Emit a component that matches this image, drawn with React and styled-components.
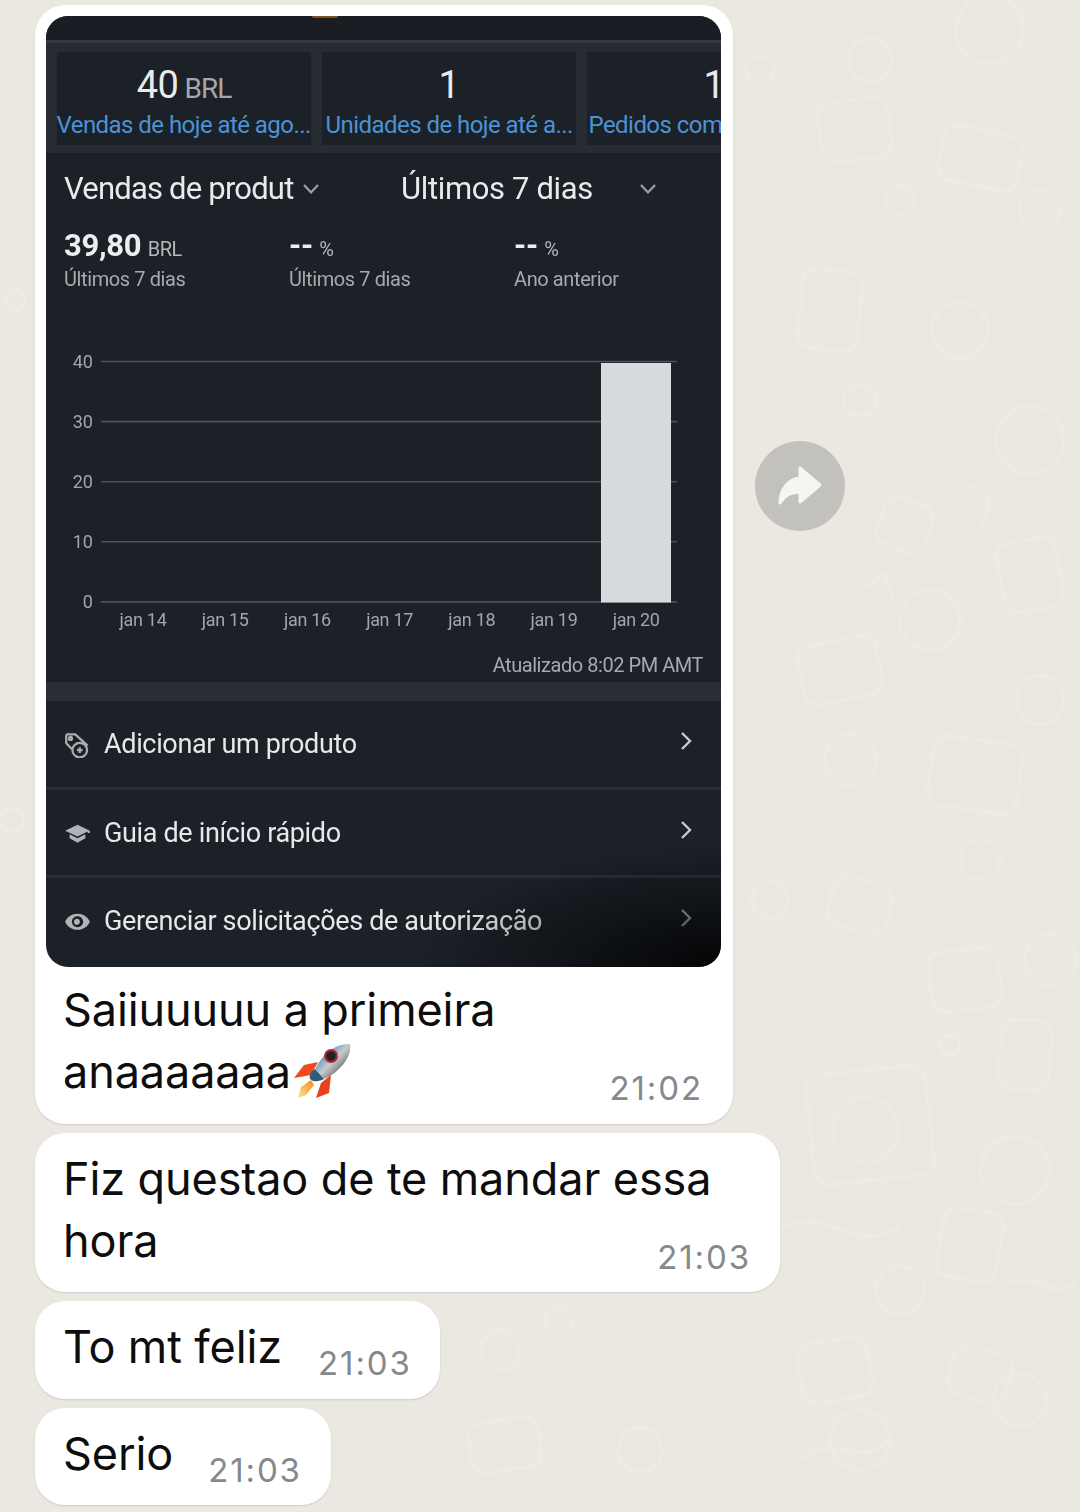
import React from 'react'
import styled, { createGlobalStyle } from 'styled-components'

const GlobalStyle = createGlobalStyle`
  html, body {
    margin: 0;
    padding: 0;
    background: #ebe8e2;
  }
  * { box-sizing: border-box; }
`

const Page = styled.div`
  position: relative;
  width: 1080px;
  height: 1512px;
  overflow: hidden;
  padding: 5px 0 0 35px;
  display: flex;
  flex-direction: column;
  gap: 9px;
  background: #ebe8e2;
  font-family: Inter, "Liberation Sans", sans-serif;
`

const Doodles = styled.svg`
  position: absolute;
  left: 0;
  top: 0;
  fill: none;
  stroke: #efede8;
  stroke-width: 2;
  stroke-linecap: round;
  stroke-linejoin: round;
  filter: blur(0.8px);
`

const Row = styled.div`
  position: relative;
  display: flex;
  align-items: flex-start;
  gap: 22px;
`

const Bubble = styled.div`
  position: relative;
  background: #fff;
  border-radius: 30px;
  box-shadow: 0 1px 2px rgba(0, 0, 0, 0.12);
  padding: ${p => p.$media ? '11px 12px 0 11px' : '15px 29px 0 29px'};
  width: ${p => p.$width}px;
  height: ${p => p.$height}px;
`

const ForwardButton = styled.div`
  margin-top: 436px;
  width: 90px;
  height: 90px;
  border-radius: 50%;
  background: #c3c1bc;
  display: flex;
  align-items: center;
  justify-content: center;
`

const Shot = styled.div`
  position: relative;
  height: 951px;
  border-radius: 22px;
  overflow: hidden;
  background: #1c2128;
  font-family: Roboto, sans-serif;
  color: #e6e8e9;
  display: flex;
  flex-direction: column;

  &::after {
    content: '';
    position: absolute;
    right: 0;
    bottom: 0;
    width: 300px;
    height: 120px;
    background: radial-gradient(ellipse at 100% 100%, rgba(0, 0, 0, 0.85), rgba(0, 0, 0, 0) 70%);
  }
`

const Blurred = styled.div`
  display: flex;
  flex-direction: column;
  flex: 1;
  filter: blur(0.6px);
`

const TopBar = styled.div`
  height: 24px;
  flex: none;
  background: #1a1e24;
  display: flex;
  justify-content: center;

  &::before {
    content: '';
    width: 26px;
    height: 2px;
    margin-left: -118px;
    background: #7a5518;
    border-radius: 0 0 8px 8px;
  }
`

const KpiStrip = styled.div`
  height: 113px;
  flex: none;
  background: #272c32;
  border-top: 3px solid #353a40;
  padding: 9px 0 8px 11px;
  display: flex;
  gap: 11px;
  overflow: hidden;
`

const KpiCard = styled.div`
  flex: none;
  width: 254px;
  background: #1c2027;
  display: flex;
  flex-direction: column;
  align-items: center;
`

const KpiValue = styled.div`
  font-size: 38px;
  line-height: 44px;
  height: 44px;
  margin-top: 11px;
  color: #e8eaeb;
  letter-spacing: -0.5px;

  span {
    font-size: 28px;
    line-height: 1;
    color: #a4a8ab;
    letter-spacing: -1px;
  }
`

const KpiLabel = styled.div`
  font-size: 24px;
  line-height: 30px;
  margin-top: 3px;
  margin-left: -1px;
  letter-spacing: -0.55px;
  color: #4a93d6;
  white-space: nowrap;
  width: 100%;
  padding-left: ${p => p.$inset}px;
`

const Selectors = styled.div`
  height: 66px;
  flex: none;
  padding: 5px 0 0 18px;
  display: flex;
  align-items: center;
  font-size: 31px;
  letter-spacing: -0.35px;
  color: #e8eaeb;
`

const Selector = styled.div`
  width: ${p => p.$width}px;
  margin-left: ${p => p.$left || 0}px;
  letter-spacing: ${p => p.$tight ? '-0.8px' : 'inherit'};
  overflow: hidden;
  white-space: nowrap;
  flex: none;
`

const Caret = styled.svg`
  flex: none;
  margin-left: ${p => p.$gap}px;
  stroke: #9ea2a6;
  fill: none;
  stroke-width: 2.2;
`

const Stats = styled.div`
  flex: none;
  height: 92px;
  padding: 10px 0 0 18px;
  display: grid;
  grid-template-columns: 225px 225px 1fr;
  align-content: start;
`

const StatValue = styled.div`
  font-size: 31px;
  line-height: 34px;
  height: 34px;
  font-weight: 700;
  letter-spacing: -0.3px;
  color: #eceeef;
  white-space: nowrap;

  span {
    font-size: 20px;
    line-height: 1;
    font-weight: 400;
    margin-left: -1px;
    color: #b4b8ba;
    letter-spacing: -0.5px;
  }
`

const StatLabel = styled.div`
  font-size: 20px;
  line-height: 25px;
  margin-top: 4px;
  letter-spacing: -0.4px;
  color: #a6aaad;
`

const ChartSvg = styled.svg`
  flex: none;
  display: block;

  text {
    font-family: Roboto, sans-serif;
    font-size: 18px;
    fill: #a2a6a9;
    letter-spacing: -0.3px;
  }
`

const Updated = styled.div`
  flex: none;
  height: 33px;
  padding: 3px 18px 0 0;
  text-align: right;
  font-size: 20px;
  line-height: 27px;
  letter-spacing: -0.45px;
  color: #a6aaad;
`

const SectionGap = styled.div`
  flex: none;
  height: 19px;
  background: #292e35;
`

const MenuRow = styled.div`
  flex: none;
  height: ${p => p.$height}px;
  padding: 0 28px ${p => p.$last ? '3px' : '0'} 18px;
  display: flex;
  align-items: center;
  border-bottom: ${p => p.$last ? 'none' : '3px solid #2b3037'};
`

const MenuIcon = styled.svg`
  flex: none;
  width: 27px;
  height: 27px;
  margin-right: 13px;
`

const MenuText = styled.div`
  flex: 1;
  font-size: 27px;
  letter-spacing: -0.35px;
  color: #e6e8e9;
  white-space: nowrap;
`

const Chevron = styled.svg`
  flex: none;
  margin-top: -6px;
  fill: none;
  stroke: #c9cccd;
  stroke-width: 2.4;
`

const CaptionBlock = styled.div`
  padding: 12px 18px 0 18px;
  margin-left: -1px;
`

const Message = styled.div`
  font-size: 45px;
  line-height: 62px;
  letter-spacing: -0.1px;
  color: #0d0d0d;
  white-space: nowrap;
`

const CaptionLine = styled.div`
  display: flex;
  align-items: flex-end;
  justify-content: space-between;
`

const MessageText = styled.span`
  display: inline-flex;
  align-items: flex-end;
`

const Time = styled.div`
  font-size: 33px;
  line-height: 40px;
  letter-spacing: 1.9px;
  color: #86898b;
  margin-bottom: -5px;
  margin-left: ${p => p.$left || 0}px;
`

const SingleLine = styled.div`
  display: flex;
  align-items: flex-end;
  margin-left: -1px;
`

const BubbleText = styled.div`
  margin-left: -1px;
`

const RocketSvg = styled.svg`
  margin-left: 3px;
  margin-bottom: 4px;
`

const Rocket = () => (
  <RocketSvg width="58" height="56" viewBox="0 0 58 56">
    <defs>
      <linearGradient id="rocketBody" x1="0" y1="0" x2="1" y2="1">
        <stop offset="0.22" stopColor="#4a8ec8" />
        <stop offset="0.5" stopColor="#c9cccc" />
        <stop offset="0.72" stopColor="#7d8082" />
        <stop offset="1" stopColor="#45494b" />
      </linearGradient>
      <linearGradient id="rocketFire" x1="0" y1="1" x2="1" y2="0">
        <stop offset="0" stopColor="#ffe590" />
        <stop offset="1" stopColor="#f08a1c" />
      </linearGradient>
    </defs>
    <path d="M0 35 L10 22 L24 19 L17 32 Z" fill="#ee4a1e" />
    <path d="M22 55 L27 40 L37 32 L35 50 Z" fill="#e8421c" />
    <path d="M4 55 L7 44 L17 37 L20 42 L12 52 Z" fill="url(#rocketFire)" />
    <path d="M56 1 C44 0 30 8 21 26 L30 36 C48 28 58 12 56 1 Z" fill="url(#rocketBody)" />
    <path d="M21 26 C16 29 15 34 16 36 L19 38 C23 39 28 37 30 36 Z" fill="#2f5f78" />
    <circle cx="37" cy="13" r="7" fill="#b3263a" />
    <circle cx="37" cy="13" r="4.8" fill="#222" />
  </RocketSvg>
)

// faint wallpaper marks, all in one place so they are easy to tweak
const doodleCircles = [
  [990, 30, 34], [870, 60, 22], [1040, 210, 20], [900, 200, 14], [960, 330, 28], [860, 400, 16],
  [1030, 440, 34], [930, 620, 30], [1040, 700, 24], [850, 760, 26], [980, 860, 20], [1050, 960, 26],
  [865, 1130, 33], [950, 1045, 10], [1015, 1170, 34], [900, 1290, 24], [1020, 1400, 26], [640, 1450, 22],
  [500, 1350, 20], [860, 1440, 30], [15, 300, 10], [12, 820, 12], [760, 70, 14], [770, 900, 18], [560, 1320, 14],
]
const doodleRects = [
  [820, 100, 70, 60, -8], [940, 130, 80, 56, 12], [800, 270, 60, 80, 6], [1000, 540, 60, 70, -10],
  [880, 500, 50, 50, 20], [800, 640, 80, 60, -12], [930, 740, 90, 70, 8], [830, 880, 60, 50, 14],
  [930, 950, 70, 60, -6], [810, 1070, 120, 110, -6], [1000, 1020, 50, 70, 4], [940, 1210, 60, 70, 10],
  [800, 1340, 70, 60, -10], [950, 1350, 60, 50, 14], [470, 1420, 70, 50, -8],
]

const Wallpaper = () => (
  <Doodles width="1080" height="1512" viewBox="0 0 1080 1512">
    {doodleCircles.map(([x, y, r]) => (
      <circle key={`${x}-${y}`} cx={x} cy={y} r={r} />
    ))}
    {doodleRects.map(([x, y, w, h, a]) => (
      <rect key={`${x}-${y}`} x={x} y={y} width={w} height={h} rx="14" transform={`rotate(${a} ${x + w / 2} ${y + h / 2})`} />
    ))}
    <path d="M780 1230 C820 1200 860 1260 900 1225 M1000 1290 C1030 1260 1060 1310 1075 1280 M860 590 l24 -16 l10 24 M960 480 l30 18 l-8 28 M800 1460 c30 -30 60 10 90 -20" />
  </Doodles>
)

const days = ['jan 14', 'jan 15', 'jan 16', 'jan 17', 'jan 18', 'jan 19', 'jan 20']
const ticks = [40, 30, 20, 10, 0]

const SalesChart = () => (
  <ChartSvg width="675" height="338" viewBox="0 0 675 338">
    {ticks.map((t, i) => (
      <g key={t}>
        <line x1="55" x2="631" y1={50.5 + i * 60.1} y2={50.5 + i * 60.1} stroke="#4d5257" strokeWidth="1.6" />
        <text x="46.5" y={56.5 + i * 60.1} textAnchor="end">{t}</text>
      </g>
    ))}
    <rect x="555" y="52" width="70" height="239.5" fill="#d8dbdd" />
    {days.map((d, i) => (
      <text key={d} x={97 + i * 82.2} y="315" textAnchor="middle">{d}</text>
    ))}
  </ChartSvg>
)

const kpis = [
  { value: '40', unit: 'BRL', label: 'Vendas de hoje até ago...', inset: 0 },
  { value: '1', label: 'Unidades de hoje até a...', inset: 4 },
  { value: '1', label: 'Pedidos com', inset: 2 },
]

const menu = [
  {
    label: 'Adicionar um produto',
    height: 89,
    icon: (
      <g fill="none" stroke="#a9adaf" strokeWidth="2">
        <path d="M2 3 h8 l11 10 M2 3 v8 l5 5" />
        <circle cx="5.8" cy="6.6" r="1.3" />
        <circle cx="14" cy="17" r="6.5" />
        <path d="M14 14.5 v5 M11.5 17 h5" />
      </g>
    ),
  },
  {
    label: 'Guia de início rápido',
    height: 88,
    icon: <path fill="#b0b4b6" d="M5 13.5 v3.7 L12 21 l7-3.8 v-3.7 L12 17 z M12 5 L1 10.5 12 15.5 21 11 v1.5 h2 V10.5 z" />,
  },
  {
    label: 'Gerenciar solicitações de autorização',
    height: 89,
    last: true,
    icon: <path fill="#b0b4b6" fillRule="evenodd" d="M12 5C7 5 2.7 8 1 12.2c1.7 4.2 6 7.2 11 7.2s9.3-3 11-7.2C21.3 8 17 5 12 5zm0 12c-2.8 0-5-2.2-5-4.8s2.2-4.8 5-4.8 5 2.2 5 4.8-2.2 4.8-5 4.8zm0-7.4a2.7 2.7 0 1 0 0 5.3 2.7 2.7 0 0 0 0-5.3z" />,
  },
]

function Caption() {
  return (
    <CaptionBlock>
      <Message>Saiiuuuuu a primeira</Message>
      <CaptionLine>
        <Message>
          <MessageText>anaaaaaaa<Rocket /></MessageText>
        </Message>
        <Time>21:02</Time>
      </CaptionLine>
    </CaptionBlock>
  )
}

export default function App() {
  return (
    <Page>
      <GlobalStyle />
      <Wallpaper />

      <Row>
        <Bubble $media $width={698} $height={1119}>
          <Shot>
            <Blurred>
              <TopBar />
              <KpiStrip>
                {kpis.map(k => (
                  <KpiCard key={k.label}>
                    <KpiValue>
                      {k.value}
                      {k.unit && <span> {k.unit}</span>}
                    </KpiValue>
                    <KpiLabel $inset={k.inset}>{k.label}</KpiLabel>
                  </KpiCard>
                ))}
              </KpiStrip>

              <Selectors>
                <Selector $width={230} $tight>Vendas de produtos</Selector>
                <Caret width="18" height="12" viewBox="0 0 18 12" $gap={8}><path d="M2 2 L9 9.5 L16 2" /></Caret>
                <Selector $width={225} $left={81}>Últimos 7 dias</Selector>
                <Caret width="18" height="12" viewBox="0 0 18 12" $gap={13}><path d="M2 2 L9 9.5 L16 2" /></Caret>
              </Selectors>

              <Stats>
                <div>
                  <StatValue>39,80 <span>BRL</span></StatValue>
                  <StatLabel>Últimos 7 dias</StatLabel>
                </div>
                <div>
                  <StatValue>-- <span>%</span></StatValue>
                  <StatLabel>Últimos 7 dias</StatLabel>
                </div>
                <div>
                  <StatValue>-- <span>%</span></StatValue>
                  <StatLabel>Ano anterior</StatLabel>
                </div>
              </Stats>

              <SalesChart />
              <Updated>Atualizado 8:02 PM AMT</Updated>
              <SectionGap />

              {menu.map(m => (
                <MenuRow key={m.label} $height={m.height} $last={m.last}>
                  <MenuIcon viewBox="0 0 24 24">{m.icon}</MenuIcon>
                  <MenuText>{m.label}</MenuText>
                  <Chevron width="14" height="22" viewBox="0 0 14 22"><path d="M3 3 L11 11 L3 19" /></Chevron>
                </MenuRow>
              ))}
            </Blurred>
          </Shot>
          <Caption />
        </Bubble>
        <ForwardButton>
          <svg width="46" height="42" viewBox="0 0 46 42">
            <path
              d="M23 3 L43 20 L23 37 V27 C14 27 7 31 3 38 C3 25 11 14 23 13 Z"
              fill="#f6f5f2"
              stroke="#f6f5f2"
              strokeWidth="3"
              strokeLinejoin="round"
            />
          </svg>
        </ForwardButton>
      </Row>

      <Bubble $width={745} $height={159}>
        <BubbleText>
          <Message>Fiz questao de te mandar essa</Message>
          <CaptionLine>
            <Message>hora</Message>
            <Time>21:03</Time>
          </CaptionLine>
        </BubbleText>
      </Bubble>

      <Bubble $width={405} $height={98}>
        <SingleLine>
          <Message>To mt feliz</Message>
          <Time $left={36}>21:03</Time>
        </SingleLine>
      </Bubble>

      <Bubble $width={296} $height={97}>
        <SingleLine>
          <Message>Serio</Message>
          <Time $left={35}>21:03</Time>
        </SingleLine>
      </Bubble>
    </Page>
  )
}
